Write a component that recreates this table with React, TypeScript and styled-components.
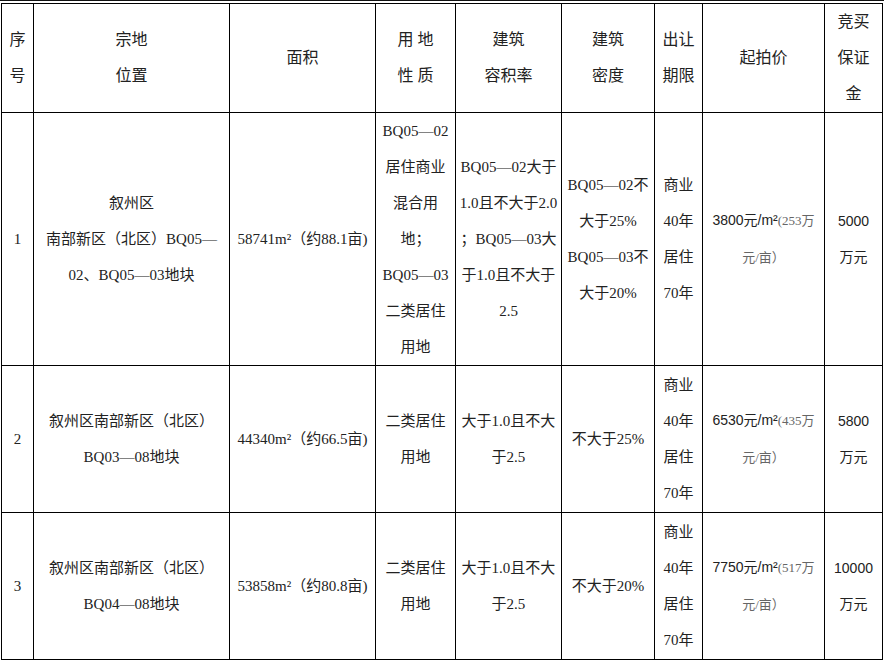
import React from "react";
import styled, { createGlobalStyle } from "styled-components";

const GlobalStyle = createGlobalStyle`
  html, body {
    margin: 0;
    padding: 0;
    background: #fff;
  }
  body {
    font-family: "Liberation Serif", "Noto Sans CJK SC", serif;
    color: #222;
  }
`;

interface LandRow {
  no: string;
  location: React.ReactNode;
  area: React.ReactNode;
  usage: React.ReactNode;
  ratio: React.ReactNode;
  density: React.ReactNode;
  price: string;
  priceNote: string;
  deposit: string;
  height: number;
}

const term = (
  <>
    商业
    <br />
    40年
    <br />
    居住
    <br />
    70年
  </>
);

const rows: LandRow[] = [
  {
    no: "1",
    location: (
      <>
        叙州区
        <br />
        南部新区（北区）BQ05—
        <br />
        02、BQ05—03地块
      </>
    ),
    area: <>58741m²（约88.1亩)</>,
    usage: (
      <>
        BQ05—02
        <br />
        居住商业
        <br />
        混合用
        <br />
        地；
        <br />
        BQ05—03
        <br />
        二类居住
        <br />
        用地
      </>
    ),
    ratio: (
      <>
        BQ05—02大于
        <br />
        1.0且不大于2.0
        <br />
        ；BQ05—03大
        <br />
        于1.0且不大于
        <br />
        2.5
      </>
    ),
    density: (
      <>
        BQ05—02不
        <br />
        大于25%
        <br />
        BQ05—03不
        <br />
        大于20%
      </>
    ),
    price: "3800",
    priceNote: "253",
    deposit: "5000",
    height: 253,
  },
  {
    no: "2",
    location: (
      <>
        叙州区南部新区（北区）
        <br />
        BQ03—08地块
      </>
    ),
    area: <>44340m²（约66.5亩)</>,
    usage: (
      <>
        二类居住
        <br />
        用地
      </>
    ),
    ratio: (
      <>
        大于1.0且不大
        <br />
        于2.5
      </>
    ),
    density: <>不大于25%</>,
    price: "6530",
    priceNote: "435",
    deposit: "5800",
    height: 147,
  },
  {
    no: "3",
    location: (
      <>
        叙州区南部新区（北区）
        <br />
        BQ04—08地块
      </>
    ),
    area: <>53858m²（约80.8亩)</>,
    usage: (
      <>
        二类居住
        <br />
        用地
      </>
    ),
    ratio: (
      <>
        大于1.0且不大
        <br />
        于2.5
      </>
    ),
    density: <>不大于20%</>,
    price: "7750",
    priceNote: "517",
    deposit: "10000",
    height: 147,
  },
];

const colWidths = [32, 196, 146, 80, 106, 93, 48, 122, 58];

const App: React.FC = () => {
  return (
    <>
      <GlobalStyle />
      <Page>
        <Table>
          <colgroup>
            {colWidths.map((w, i) => (
              <col key={i} style={{ width: w }} />
            ))}
          </colgroup>
          <thead>
            <Row $height={109}>
              <HeadCell>
                序
                <br />号
              </HeadCell>
              <HeadCell>
                宗地
                <br />
                位置
              </HeadCell>
              <HeadCell>面积</HeadCell>
              <HeadCell>
                用 地
                <br />
                性 质
              </HeadCell>
              <HeadCell>
                建筑
                <br />
                容积率
              </HeadCell>
              <HeadCell>
                建筑
                <br />
                密度
              </HeadCell>
              <HeadCell>
                出让
                <br />
                期限
              </HeadCell>
              <HeadCell>起拍价</HeadCell>
              <HeadCell>
                竞买
                <br />
                保证
                <br />金
              </HeadCell>
            </Row>
          </thead>
          <tbody>
            {rows.map((r) => (
              <Row key={r.no} $height={r.height}>
                <Cell>{r.no}</Cell>
                <Cell>{r.location}</Cell>
                <Cell>{r.area}</Cell>
                <Cell>{r.usage}</Cell>
                <Cell>{r.ratio}</Cell>
                <Cell>{r.density}</Cell>
                <Cell>{term}</Cell>
                <Cell $sans>
                  {r.price}元/m²
                  <Note>
                    ({r.priceNote}万
                    <br />
                    元/亩）
                  </Note>
                </Cell>
                <Cell $sans>
                  {r.deposit}
                  <br />
                  万元
                </Cell>
              </Row>
            ))}
          </tbody>
        </Table>
      </Page>
    </>
  );
};

/* ================== STYLED COMPONENTS ================== */

const Page = styled.div`
  width: 884px;
  border-top: 1px solid #111;
  padding-top: 2px;
`;

const Table = styled.table`
  margin-left: 1px;
  width: 882px;
  table-layout: fixed;
  border-collapse: collapse;
`;

const Row = styled.tr<{ $height: number }>`
  height: ${({ $height }) => $height}px;
`;

const HeadCell = styled.th`
  border: 1px solid #000;
  padding: 0 1px;
  font-weight: normal;
  font-size: 16px;
  line-height: 36px;
  text-align: center;
  vertical-align: middle;
  white-space: nowrap;
  overflow: hidden;
`;

const Cell = styled.td<{ $sans?: boolean }>`
  border: 1px solid #000;
  padding: 0 1px;
  font-family: ${({ $sans }) =>
    $sans
      ? '"Liberation Sans", "Noto Sans CJK SC", sans-serif'
      : '"Liberation Serif", "Noto Sans CJK SC", serif'};
  font-size: ${({ $sans }) => ($sans ? 14 : 15)}px;
  line-height: 36px;
  text-align: center;
  vertical-align: middle;
  white-space: nowrap;
  overflow: hidden;
`;

const Note = styled.span`
  font-family: "Liberation Serif", "Noto Sans CJK SC", serif;
  font-size: 13px;
  color: #666;
`;

export default App;
